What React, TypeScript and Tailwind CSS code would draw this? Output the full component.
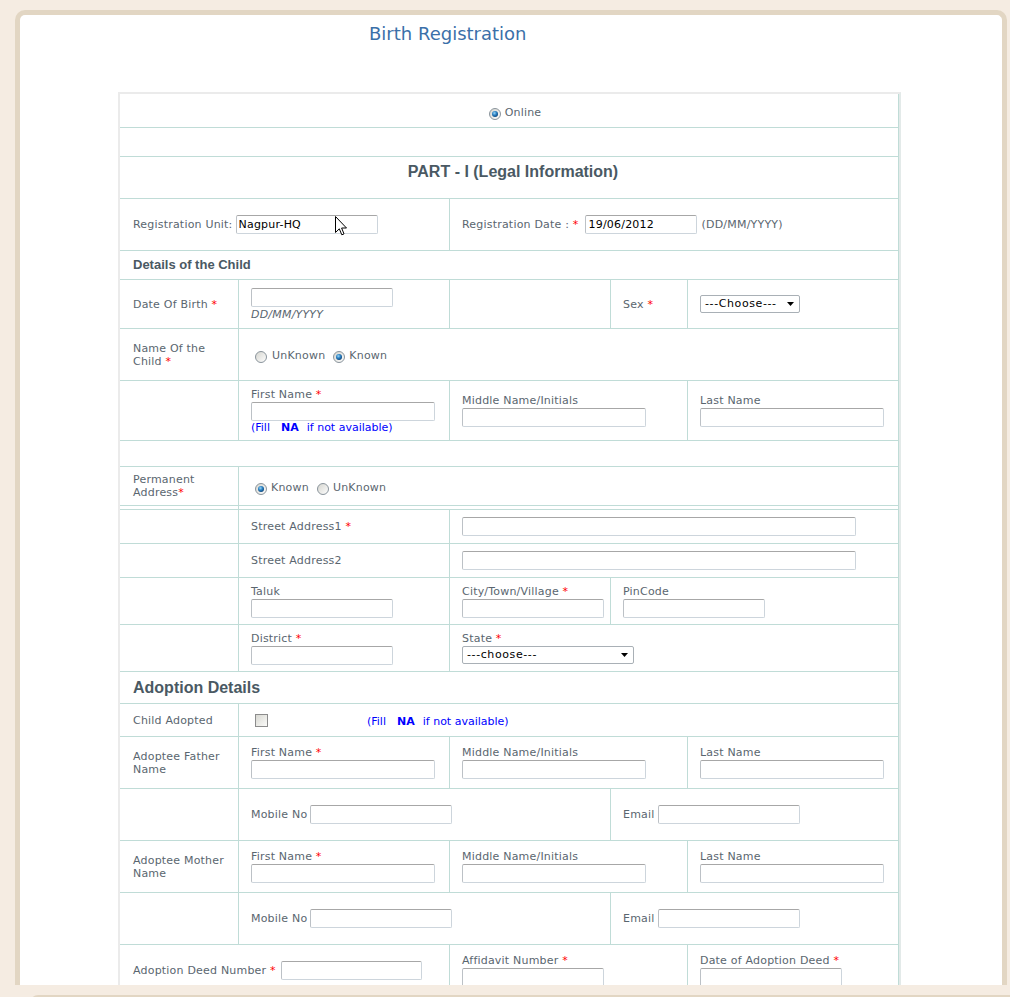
import React from 'react';

type Kids = { children?: React.ReactNode };

function Req() {
  return <span className="text-[#ff0000]">*</span>;
}

function Field({ w, value, className = '' }: { w: string; value?: string; className?: string }) {
  return (
    <input
      readOnly
      value={value ?? ''}
      className={`${w} h-[19px] shrink-0 rounded-[2px] border border-[#cdd5dc] border-t-[#a7a7a7] border-l-[#bcc1c6] bg-white px-[2px] text-[11px] text-black outline-none ${className}`}
    />
  );
}

function Radio({ on }: { on?: boolean }) {
  return (
    <svg width="12" height="12" viewBox="0 0 12 12" className="shrink-0">
      <defs>
        <linearGradient id="rbg" x1="0" y1="0" x2="1" y2="1">
          <stop offset="0" stopColor="#d4d4ce" />
          <stop offset="1" stopColor="#ffffff" />
        </linearGradient>
        <radialGradient id="rdot" cx="0.4" cy="0.35" r="0.7">
          <stop offset="0" stopColor="#9ad6f6" />
          <stop offset="0.5" stopColor="#2a80c2" />
          <stop offset="1" stopColor="#0b3f72" />
        </radialGradient>
      </defs>
      <circle cx="6" cy="6" r="5.5" fill="url(#rbg)" stroke="#8a949c" />
      {on && <circle cx="6" cy="6" r="3" fill="url(#rdot)" />}
    </svg>
  );
}

function Checkbox() {
  return (
    <div className="h-[13px] w-[13px] shrink-0 border border-[#8c8c8c] bg-gradient-to-br from-[#d8d8d2] to-[#fbfbf9]" />
  );
}

function Select({ w, text }: { w: string; text: string }) {
  return (
    <div
      className={`${w} flex h-[18px] shrink-0 items-center justify-between rounded-[2px] border border-[#a9b0b6] bg-white pl-[4px] pr-[5px] text-[11px] text-black`}
    >
      <span className="tracking-[0.6px]">{text}</span>
      <svg width="7" height="4" viewBox="0 0 7 4">
        <path d="M0 0h7L3.5 4z" fill="#000" />
      </svg>
    </div>
  );
}

function Cursor() {
  return (
    <svg width="12" height="20" viewBox="0 0 12 20" className="absolute left-[99px] top-[1px]">
      <path d="M0.5 0.5V16.5L4.3 12.8L6.8 18.8L9 17.9L6.6 12H11.5Z" fill="#fff" stroke="#000" strokeWidth="1" />
    </svg>
  );
}

function Row({ h, children }: { h: string } & Kids) {
  return <div className={`flex ${h} border-b border-[#c0dcd7]`}>{children}</div>;
}

function Cell({ w, className = '', children }: { w: string; className?: string } & Kids) {
  return (
    <div className={`${w} flex h-full shrink-0 items-center border-r border-[#c0dcd7] ${className}`}>{children}</div>
  );
}

function Inline({ children }: Kids) {
  return <div className="flex items-baseline">{children}</div>;
}

function Stack({ label, children }: { label: React.ReactNode } & Kids) {
  return (
    <div className="flex flex-col">
      <span className="leading-[13px]">{label}</span>
      <div className="mt-[1px]">{children}</div>
    </div>
  );
}

function FillNote() {
  return (
    <span className="leading-[13px] tracking-normal text-[#0000ff]">
      (Fill<b className="ml-[11px] mr-[8px]">NA</b>if not available)
    </span>
  );
}

function ContactRow() {
  return (
    <Row h="h-[52px]">
      <Cell w="w-[119px]" />
      <Cell w="w-[372px]" className="pl-[12px]">
        <Inline>
          <span>Mobile No</span>
          <Field w="w-[142px]" className="ml-[3px]" />
        </Inline>
      </Cell>
      <Cell w="w-[288px]" className="pl-[12px]">
        <Inline>
          <span>Email</span>
          <Field w="w-[142px]" className="ml-[3px]" />
        </Inline>
      </Cell>
    </Row>
  );
}

function NameRow({ label }: { label: React.ReactNode }) {
  return (
    <Row h="h-[52px]">
      <Cell w="w-[119px]" className="pl-[13px]">
        <span className="leading-[13px]">{label}</span>
      </Cell>
      <Cell w="w-[211px]" className="pl-[12px]">
        <Stack label={<>First Name <Req /></>}>
          <Field w="w-[184px]" />
        </Stack>
      </Cell>
      <Cell w="w-[238px]" className="pl-[12px]">
        <Stack label="Middle Name/Initials">
          <Field w="w-[184px]" />
        </Stack>
      </Cell>
      <Cell w="w-[211px]" className="pl-[12px]">
        <Stack label="Last Name">
          <Field w="w-[184px]" />
        </Stack>
      </Cell>
    </Row>
  );
}

export default function App() {
  const heading = "font-['Liberation_Sans',Arial,sans-serif] font-bold tracking-normal text-[#4a5963]";

  return (
    <div className="h-[997px] w-[1010px] overflow-hidden bg-[#f5ece2] pt-[10px] font-['DejaVu_Sans',Verdana,sans-serif] text-[11px] tracking-[0.2px] text-[#5a666f]">
      <div className="ml-[15px] h-[975px] w-[992px] overflow-hidden rounded-t-[10px] border-[5px] border-b-0 border-[#e2d6c3] bg-white">
        <div className="pl-[349px] pt-[8px] text-[18px] leading-[22px] tracking-normal text-[#3b70a9]">Birth Registration</div>

        <div className="ml-[98px] mt-[47px] w-[783px] border-l-2 border-t-2 border-r-2 border-l-[#ebebeb] border-t-[#ebebeb] border-r-[#e3eae9]">
          <Row h="h-[34px]">
            <Cell w="w-[779px]" className="justify-center pl-[12px] pt-[6px]">
              <Radio on />
              <span className="ml-[4px]">Online</span>
            </Cell>
          </Row>

          <Row h="h-[29px]">
            <Cell w="w-[779px]" />
          </Row>

          <Row h="h-[42px]">
            <Cell w="w-[779px]" className="justify-center pl-[8px]">
              <span className={`${heading} mt-[6px] self-start text-[16px] leading-[18px]`}>PART - I (Legal Information)</span>
            </Cell>
          </Row>

          <Row h="h-[52px]">
            <Cell w="w-[330px]" className="pl-[13px]">
              <Inline>
                <span>Registration Unit:</span>
                <div className="relative ml-[3px]">
                  <Field w="w-[142px]" value="Nagpur-HQ" />
                  <Cursor />
                </div>
              </Inline>
            </Cell>
            <Cell w="w-[449px]" className="pl-[12px]">
              <Inline>
                <span>
                  Registration Date : <Req />
                </span>
                <Field w="w-[112px]" value="19/06/2012" className="ml-[6px] px-[3px]" />
                <span className="ml-[5px]">(DD/MM/YYYY)</span>
              </Inline>
            </Cell>
          </Row>

          <Row h="h-[29px]">
            <Cell w="w-[779px]" className="pl-[13px]">
              <span className={`${heading} text-[13px]`}>Details of the Child</span>
            </Cell>
          </Row>

          <Row h="h-[49px]">
            <Cell w="w-[119px]" className="pl-[13px] pt-[2px]">
              <span>
                Date Of Birth <Req />
              </span>
            </Cell>
            <Cell w="w-[211px]" className="pl-[12px]">
              <div className="flex flex-col">
                <Field w="w-[142px]" />
                <span className="mt-[1px] italic leading-[13px]">DD/MM/YYYY</span>
              </div>
            </Cell>
            <Cell w="w-[161px]" />
            <Cell w="w-[77px]" className="pl-[12px] pt-[2px]">
              <span>
                Sex <Req />
              </span>
            </Cell>
            <Cell w="w-[211px]" className="pl-[12px]">
              <Select w="w-[100px]" text="---Choose---" />
            </Cell>
          </Row>

          <Row h="h-[52px]">
            <Cell w="w-[119px]" className="pl-[13px]">
              <span className="leading-[13px]">
                Name Of the
                <br />
                Child <Req />
              </span>
            </Cell>
            <Cell w="w-[660px]" className="pl-[16px] pt-[4px]">
              <Radio />
              <span className="ml-[5px]">UnKnown</span>
              <span className="ml-[8px]">
                <Radio on />
              </span>
              <span className="ml-[4px]">Known</span>
            </Cell>
          </Row>

          <Row h="h-[60px]">
            <Cell w="w-[119px]" />
            <Cell w="w-[211px]" className="pl-[12px]">
              <div className="flex flex-col">
                <span className="leading-[13px]">
                  First Name <Req />
                </span>
                <Field w="w-[184px]" className="mt-[1px]" />
                <FillNote />
              </div>
            </Cell>
            <Cell w="w-[238px]" className="pl-[12px]">
              <Stack label="Middle Name/Initials">
                <Field w="w-[184px]" />
              </Stack>
            </Cell>
            <Cell w="w-[211px]" className="pl-[12px]">
              <Stack label="Last Name">
                <Field w="w-[184px]" />
              </Stack>
            </Cell>
          </Row>

          <Row h="h-[26px]">
            <Cell w="w-[779px]" />
          </Row>

          <Row h="h-[39px]">
            <Cell w="w-[119px]" className="pl-[13px]">
              <span className="leading-[13px]">
                Permanent
                <br />
                Address<Req />
              </span>
            </Cell>
            <Cell w="w-[660px]" className="pl-[16px] pt-[5px]">
              <Radio on />
              <span className="ml-[4px]">Known</span>
              <span className="ml-[8px]">
                <Radio />
              </span>
              <span className="ml-[4px]">UnKnown</span>
            </Cell>
          </Row>

          <Row h="h-[4px]">
            <Cell w="w-[119px]" />
            <Cell w="w-[660px]" />
          </Row>

          <Row h="h-[34px]">
            <Cell w="w-[119px]" />
            <Cell w="w-[211px]" className="pl-[12px] pt-[2px]">
              <span>
                Street Address1 <Req />
              </span>
            </Cell>
            <Cell w="w-[449px]" className="pl-[12px]">
              <Field w="w-[394px]" />
            </Cell>
          </Row>

          <Row h="h-[34px]">
            <Cell w="w-[119px]" />
            <Cell w="w-[211px]" className="pl-[12px] pt-[2px]">
              <span>Street Address2</span>
            </Cell>
            <Cell w="w-[449px]" className="pl-[12px]">
              <Field w="w-[394px]" />
            </Cell>
          </Row>

          <Row h="h-[47px]">
            <Cell w="w-[119px]" />
            <Cell w="w-[211px]" className="pl-[12px]">
              <Stack label="Taluk">
                <Field w="w-[142px]" />
              </Stack>
            </Cell>
            <Cell w="w-[161px]" className="pl-[12px]">
              <Stack label={<>City/Town/Village <Req /></>}>
                <Field w="w-[142px]" />
              </Stack>
            </Cell>
            <Cell w="w-[288px]" className="pl-[12px]">
              <Stack label="PinCode">
                <Field w="w-[142px]" />
              </Stack>
            </Cell>
          </Row>

          <Row h="h-[47px]">
            <Cell w="w-[119px]" />
            <Cell w="w-[211px]" className="pl-[12px]">
              <Stack label={<>District <Req /></>}>
                <Field w="w-[142px]" />
              </Stack>
            </Cell>
            <Cell w="w-[449px]" className="pl-[12px]">
              <Stack label={<>State <Req /></>}>
                <Select w="w-[172px]" text="---choose---" />
              </Stack>
            </Cell>
          </Row>

          <Row h="h-[32px]">
            <Cell w="w-[779px]" className="pl-[13px]">
              <span className={`${heading} text-[16px]`}>Adoption Details</span>
            </Cell>
          </Row>

          <Row h="h-[33px]">
            <Cell w="w-[119px]" className="pl-[13px] pt-[2px]">
              <span>Child Adopted</span>
            </Cell>
            <Cell w="w-[660px]" className="pl-[16px]">
              <Checkbox />
              <span className="ml-[99px] mt-[4px]">
                <FillNote />
              </span>
            </Cell>
          </Row>

          <NameRow
            label={
              <>
                Adoptee Father
                <br />
                Name
              </>
            }
          />

          <ContactRow />

          <NameRow
            label={
              <>
                Adoptee Mother
                <br />
                Name
              </>
            }
          />

          <ContactRow />

          <Row h="h-[52px]">
            <Cell w="w-[330px]" className="pl-[13px]">
              <Inline>
                <span>
                  Adoption Deed Number <Req />
                </span>
                <Field w="w-[141px]" className="ml-[5px]" />
              </Inline>
            </Cell>
            <Cell w="w-[238px]" className="pl-[12px]">
              <Stack label={<>Affidavit Number <Req /></>}>
                <Field w="w-[142px]" />
              </Stack>
            </Cell>
            <Cell w="w-[211px]" className="pl-[12px]">
              <Stack label={<>Date of Adoption Deed <Req /></>}>
                <Field w="w-[142px]" />
              </Stack>
            </Cell>
          </Row>
        </div>
      </div>
      <div className="ml-[30px] mt-[10px] h-[10px] w-[1000px] rounded-tl-[8px] border-l-[3px] border-t-[3px] border-[#e2d6c3]" />
    </div>
  );
}
